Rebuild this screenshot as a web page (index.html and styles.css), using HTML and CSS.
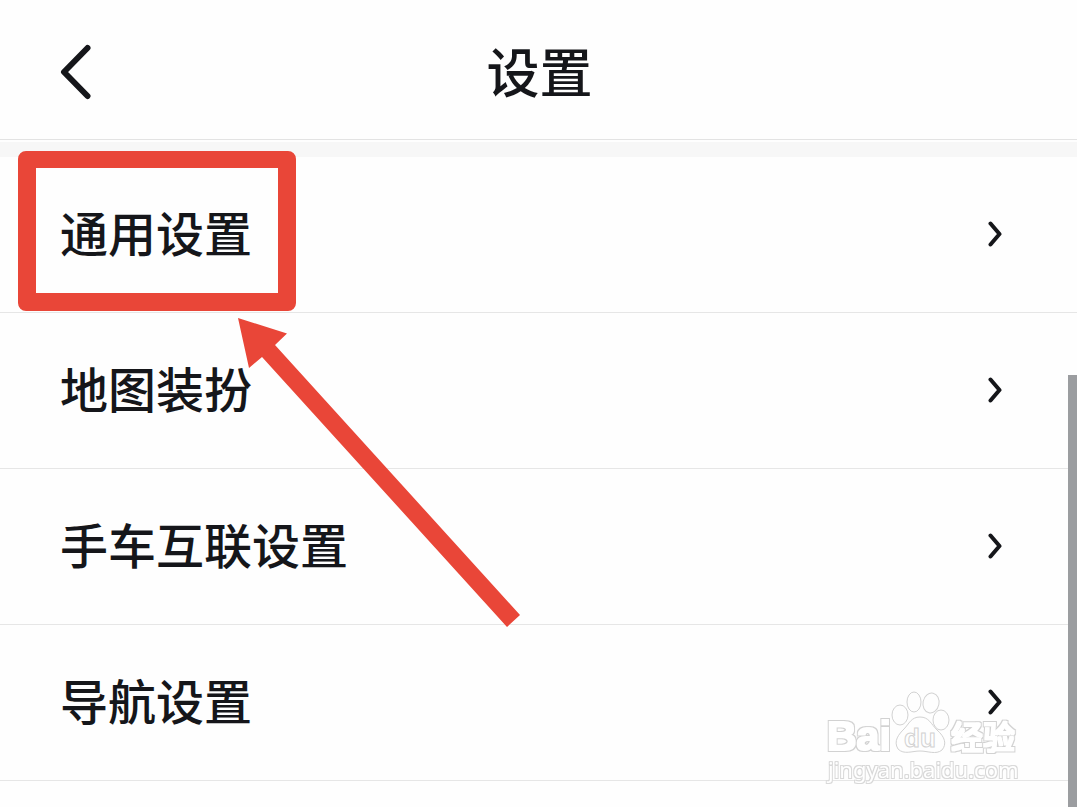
FILE: index.html
```html
<!DOCTYPE html>
<html lang="zh-CN">
<head>
<meta charset="utf-8">
<meta name="viewport" content="width=device-width, initial-scale=1">
<title>设置</title>
<link rel="stylesheet" href="styles.css">
</head>
<body>
<div class="screen">
  <header class="header">
    <button class="back" type="button" aria-label="返回">
      <svg width="32" height="56" viewBox="0 0 32 56"><path d="M27.500 4 4 28 27.500 52"/></svg>
    </button>
    <h1 class="title">设置</h1>
  </header>
  <main class="content">
    <nav class="list">
      <a class="row" href="#general">通用设置<svg class="chevron" width="14" height="26" viewBox="0 0 14 26"><path d="M2.500 2.500 11.500 13 2.500 23.500"/></svg></a>
      <a class="row" href="#map">地图装扮<svg class="chevron" width="14" height="26" viewBox="0 0 14 26"><path d="M2.500 2.500 11.500 13 2.500 23.500"/></svg></a>
      <a class="row" href="#car">手车互联设置<svg class="chevron" width="14" height="26" viewBox="0 0 14 26"><path d="M2.500 2.500 11.500 13 2.500 23.500"/></svg></a>
      <a class="row" href="#navigation">导航设置<svg class="chevron" width="14" height="26" viewBox="0 0 14 26"><path d="M2.500 2.500 11.500 13 2.500 23.500"/></svg></a>
    </nav>
    <svg class="highlight" width="278" height="160" viewBox="0 0 278 160" aria-hidden="true"><path fill-rule="evenodd" d="M8 0H270a8 8 0 0 1 8 8V152a8 8 0 0 1-8 8H8a8 8 0 0 1-8-8V8a8 8 0 0 1 8-8ZM18 17V142H260V17Z"/></svg>
    <svg class="arrow" width="282" height="310" viewBox="0 0 282 310" aria-hidden="true"><path d="M0 0 49 15.500 37 27 282 297 269 309 24 39 11 50Z"/></svg>
  </main>
  <div class="scrollbar"></div>
  <svg class="watermark" width="204" height="104" viewBox="0 0 204 104">
    <defs>
      <filter id="outline" x="-5%" y="-20%" width="110%" height="140%">
        <feMorphology in="SourceAlpha" operator="dilate" radius="2" result="outer"/>
        <feFlood flood-color="#d2d2d2"/>
        <feComposite in2="outer" operator="in" result="edge"/>
        <feMorphology in="SourceAlpha" operator="dilate" radius="1" result="inner"/>
        <feFlood flood-color="#ffffff"/>
        <feComposite in2="inner" operator="in" result="face"/>
        <feMerge><feMergeNode in="edge"/><feMergeNode in="face"/></feMerge>
      </filter>
      <filter id="thin-outline" x="-5%" y="-20%" width="110%" height="140%">
        <feMorphology in="SourceAlpha" operator="dilate" radius="1" result="outer"/>
        <feFlood flood-color="#d8d8d8"/>
        <feComposite in2="outer" operator="in" result="edge"/>
        <feMerge><feMergeNode in="edge"/><feMergeNode in="SourceGraphic"/></feMerge>
      </filter>
    </defs>
    <g class="paw">
      <ellipse cx="80" cy="29" rx="8" ry="10"/>
      <ellipse cx="94" cy="16" rx="7" ry="10"/>
      <ellipse cx="111" cy="17" rx="8" ry="10" transform="rotate(12 111 17)"/>
      <ellipse cx="121" cy="34" rx="8" ry="10"/>
      <path d="M100 31C109 31 111 38 117 44C125 51 127 58 122 64C116 69 108 65 100 65C92 65 84 69 78 63C73 55 79 48 84 43C89 38 91 31 100 31Z"/>
      <text class="du" x="84" y="61">du</text>
    </g>
    <g filter="url(#outline)">
      <text class="brand" x="7" y="64">Bai</text>
      <text class="brand-cn" x="131" y="63">经验</text>
    </g>
    <text class="site" x="8" y="92" filter="url(#thin-outline)">jingyan.baidu.com</text>
  </svg>
</div>
</body>
</html>
```
FILE: styles.css
```css
body {
  margin: 0;
  background: #fefefe;
  color: #15161a;
  font-family: "Noto Sans CJK SC", sans-serif;
}

.screen {
  position: relative;
  min-height: 100vh;
  overflow: hidden;
}

.header {
  display: grid;
  grid-template-columns: 122px 1fr 120px;
  align-items: center;
  height: 139px;
  border-bottom: 1px solid #e3e3e3;
}

.back {
  display: flex;
  justify-self: start;
  margin: 4px 0 0 60px;
  padding: 0;
  border: 0;
  background: none;
}

.back path,
.chevron path {
  fill: none;
  stroke: #15161a;
  stroke-width: 6px;
  stroke-linecap: round;
  stroke-linejoin: round;
}

.chevron path {
  stroke-width: 4px;
}

.title {
  margin: 0;
  font-size: 53px;
  font-weight: 500;
  line-height: 72px;
  text-align: center;
}

.content {
  position: relative;
  border-top: 2px solid #fefefe;
}

.list {
  border-top: 15px solid #f7f7f7;
}

.row {
  display: flex;
  align-items: center;
  justify-content: space-between;
  box-sizing: border-box;
  height: 156px;
  padding: 0 75px 8px 60px;
  border-bottom: 1px solid #e6e6e6;
  color: inherit;
  font-size: 48px;
  font-weight: 500;
  text-decoration: none;
}

.chevron {
  margin-top: 6px;
}

.highlight,
.arrow {
  position: absolute;
  fill: #e94638;
  pointer-events: none;
}

.highlight {
  top: 9px;
  left: 18px;
}

.arrow {
  top: 176px;
  left: 238px;
}

.scrollbar {
  position: absolute;
  top: 375px;
  right: 0;
  bottom: 0;
  width: 9px;
  background: #9b9da0;
}

.watermark {
  position: absolute;
  right: 53px;
  bottom: 17px;
  pointer-events: none;
}

.paw {
  fill: #fefefe;
  stroke: #d2d2d2;
  stroke-width: 1px;
}

.brand,
.du {
  font-family: "Liberation Sans", sans-serif;
  font-weight: 700;
}

.brand {
  font-size: 41px;
}

.du {
  font-size: 26px;
}

.brand-cn {
  font-size: 32px;
  font-weight: 500;
}

.site {
  fill: #ffffff;
  font-family: "Noto Sans", sans-serif;
  font-size: 22px;
}
```
